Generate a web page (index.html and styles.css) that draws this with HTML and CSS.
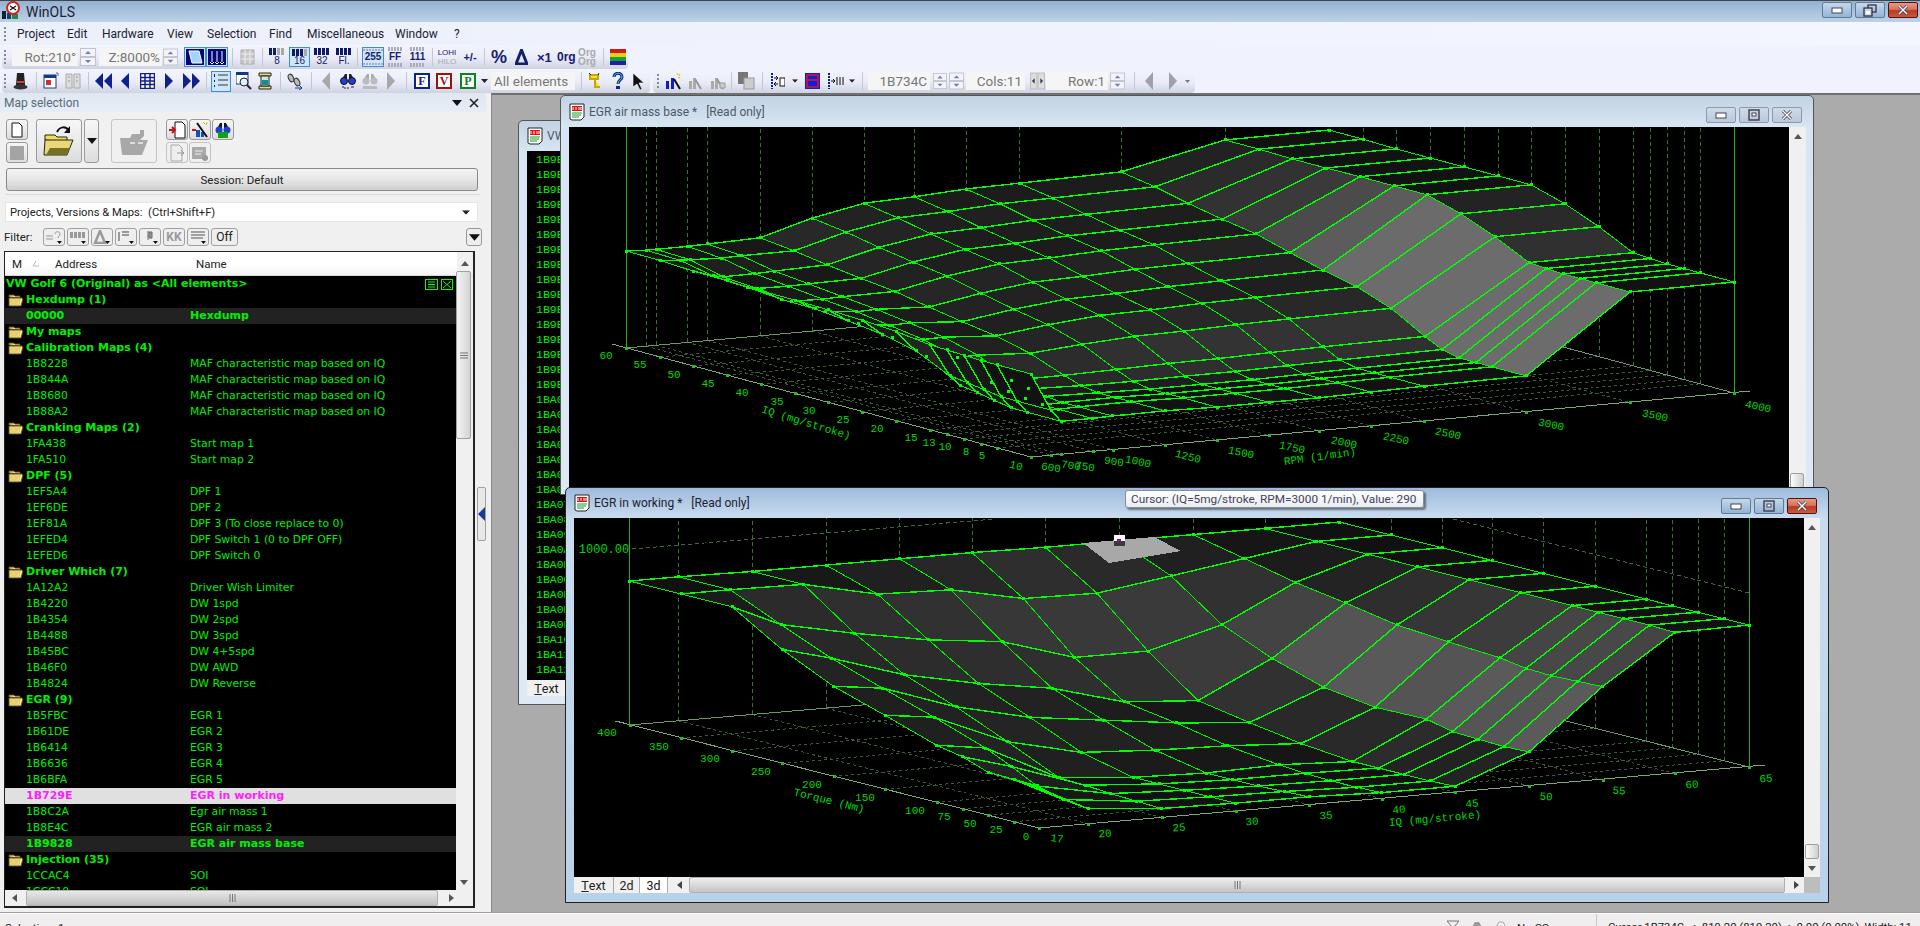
FILE: index.html
```html
<!DOCTYPE html>
<html lang="en">
<head>
<meta charset="utf-8">
<title>WinOLS</title>
<link rel="stylesheet" href="styles.css">
</head>
<body>
<svg class="defs" width="0" height="0" aria-hidden="true">
  <symbol id="folder" viewBox="0 0 16 14">
    <path d="M1 4V2h5l1 1h5v2z" fill="#f6e27a" stroke="#5a4a10"/>
    <path d="M1 5h13l1 1-2 7H1z" fill="#f4ecb0" stroke="#5a4a10"/>
    <path d="M2 7h11M2 9h10M2 11h10" stroke="#d8b830"/>
  </symbol>
  <symbol id="winicon" viewBox="0 0 16 18">
    <path d="M1 1h14v13l-3 3H3l-2-1z" fill="#fff" stroke="#222"/>
    <rect x="3" y="3" width="10" height="5" fill="#e01010"/>
    <path d="M4 4v3M7 4v3M10 4v3M12 4v3" stroke="#fff"/>
    <path d="M3 10h10M3 12h9M3 14h7" stroke="#10a030"/>
  </symbol>
  <symbol id="spin" viewBox="0 0 16 18">
    <rect x=".5" y=".5" width="15" height="8" fill="#f4f4f8" stroke="#c0c4d0"/>
    <rect x=".5" y="9.5" width="15" height="8" fill="#f4f4f8" stroke="#c0c4d0"/>
    <path d="M5 6l3-3 3 3zM5 12l3 3 3-3z" fill="#6c7cb8"/>
  </symbol>
  <symbol id="ddown" viewBox="0 0 7 4"><path d="M0 0h7L3.500 4z" fill="#222"/></symbol>
  <symbol id="capmin" viewBox="0 0 12 8"><rect x="1" y="2" width="10" height="5" fill="#fff" stroke="#445"/></symbol>
  <symbol id="capmax" viewBox="0 0 12 12"><rect x="1" y="1" width="10" height="10" fill="none" stroke="#445" stroke-width="1.500"/><rect x="4" y="4" width="4" height="3" fill="#fff" stroke="#445"/></symbol>
  <symbol id="capx" viewBox="0 0 12 10"><path d="M2 1l8 8M10 1L2 9" stroke="#445" stroke-width="3"/><path d="M2 1l8 8M10 1L2 9" stroke="#fff" stroke-width="1.400"/></symbol>
</svg>

<header class="titlebar">
  <svg class="appicon" width="18" height="19" viewBox="0 0 18 19"><rect x="0" y="10" width="4" height="8" fill="#123"/><rect x="5" y="12" width="4" height="6" fill="#146"/><rect x="10" y="13" width="6" height="5" fill="#284"/><circle cx="11" cy="7" r="6" fill="#fff" stroke="#d02020" stroke-width="2"/><path d="M8 5l6 4M14 5L8 9" stroke="#111" stroke-width="1.200"/></svg>
  <span class="apptitle">WinOLS</span>
  <div class="capgroup">
    <span class="cap capa"><svg width="12" height="8"><use href="#capmin"/></svg></span>
    <span class="cap capa"><svg width="14" height="13" viewBox="0 0 14 13"><rect x="5" y="1" width="8" height="7" fill="none" stroke="#334" stroke-width="1.300"/><rect x="1" y="4" width="8" height="8" fill="#c6d6e8" stroke="#334" stroke-width="1.300"/><rect x="3" y="7" width="4" height="3" fill="#fff"/></svg></span>
    <span class="cap capred"><svg width="12" height="10"><use href="#capx"/></svg></span>
  </div>
</header>

<nav class="menubar">
  <span class="grip"></span>
  <span class="mi m1w">Project</span><span class="mi m2w">Edit</span><span class="mi m3w">Hardware</span><span class="mi m4w">View</span><span class="mi m5w">Selection</span><span class="mi m6w">Find</span><span class="mi m7w">Miscellaneous</span><span class="mi m8w">Window</span><span class="mi">?</span>
</nav>

<div class="toolrow">
  <div class="tband band1">
    <span class="grip g2"></span>
    <span class="tbox m6 w66">Rot:210°</span>
    <svg class="m2" width="16" height="18"><use href="#spin"/></svg>
    <span class="tbox m3 w63">Z:8000%</span>
    <svg class="m1" width="15" height="18"><use href="#spin"/></svg>
    <span class="tact m6 w22"><svg width="18" height="16" viewBox="0 0 18 16"><rect width="18" height="16" fill="#05057a"/><path d="M3 2h10l3 12H6z" fill="#9fd4ff" stroke="#fff"/></svg></span>
    <span class="tact w22"><svg width="18" height="16" viewBox="0 0 18 16"><rect width="18" height="16" fill="#05057a"/><path d="M4 2v11M9 2v11M14 2v11M2 13l2 2 2-2M7 13l2 2 2-2M12 13l2 2 2-2" stroke="#fff" fill="none"/></svg></span>
    <span class="sep m4"></span>
    <svg class="m7" width="15" height="16" viewBox="0 0 15 16"><path d="M1 1h13v14H1z" fill="#c8c8c8" stroke="#aaa"/><path d="M1 5h13M1 10h13M5 1v14M10 1v14" stroke="#eee"/></svg>
    <span class="sep m7"></span>
    <span class="tico m6 w16"><svg width="16" height="7" viewBox="0 0 16 7"><path d="M0 0h3v7H0zM4 0h3v7H4z" fill="#111a66"/><path d="M8 0h3v7H8zM12 0h3v7h-3z" fill="#aaa"/></svg><b>8</b></span>
    <span class="tact m4 w21 stack"><svg width="16" height="7" viewBox="0 0 16 7"><path d="M0 0h3v7H0zM4 0h3v7H4zM8 0h3v7H8z" fill="#111a66"/><path d="M12 0h3v7h-3z" fill="#aaa"/></svg><b>16</b></span>
    <span class="tico m4 w16"><svg width="16" height="7" viewBox="0 0 16 7"><path d="M0 0h3v7H0zM4 0h3v7H4zM8 0h3v7H8zM12 0h3v7h-3z" fill="#111a66"/></svg><b>32</b></span>
    <span class="tico m6 w16"><svg width="16" height="7" viewBox="0 0 16 7"><path d="M0 0h3v7H0zM4 0h3v7H4zM8 0h3v7H8zM12 0h3v7h-3z" fill="#111a66"/></svg><b>Fl.</b></span>
    <span class="sep m5"></span>
    <span class="tact m4 w22 fmt"><i></i><b>255</b><i></i></span>
    <span class="tico fmt m4 w14"><i></i><b>FF</b><i></i></span>
    <span class="tico fmt m8 w15"><i></i><b>111</b><i></i></span>
    <span class="sep m7"></span>
    <span class="tico lohi m5 w18"><b>LOHI</b><i>HILO</i></span>
    <span class="tbig m6 w16 plus">+/-</span>
    <span class="sep m6"></span>
    <span class="tbig m6 w16 pct">%</span>
    <svg class="m8" width="13" height="16" viewBox="0 0 13 16"><path d="M6.500 1L12 15H1z" fill="none" stroke="#14206e" stroke-width="3"/></svg>
    <span class="tbig m9 w13 x1">×1</span>
    <span class="tbig m7 w16 org">0rg</span>
    <span class="tico fmt org2 m5 w18"><b>Org</b><b>Org</b></span>
    <span class="sep m7"></span>
    <svg class="m6" width="16" height="16" viewBox="0 0 16 16"><rect width="16" height="4" fill="#d01818"/><rect y="4" width="16" height="4" fill="#e8d010"/><rect y="8" width="16" height="4" fill="#18a030"/><rect y="12" width="16" height="4" fill="#1820b0"/></svg>
  </div>
</div>

<div class="toolrow">
  <div class="tband band2">
    <span class="grip g2"></span>
    <svg class="m7" width="15" height="18" viewBox="0 0 15 18"><path d="M4 1h7l1 12H3z" fill="#222"/><rect x="4" y="9" width="7" height="2" fill="#d04040"/><ellipse cx="7.500" cy="15" rx="7" ry="2.500" fill="#333"/></svg>
    <span class="sep m8"></span>
    <svg class="m6" width="16" height="18" viewBox="0 0 16 18"><rect x="1" y="3" width="12" height="13" fill="#fff" stroke="#123a80"/><rect x="1" y="3" width="12" height="3" fill="#123a80"/><rect x="3" y="8" width="5" height="5" fill="#d03030"/><path d="M13 1h2v3" stroke="#666" fill="none"/></svg>
    <svg class="m6" width="16" height="18" viewBox="0 0 16 18"><path d="M1 2h6v14H1zM9 2h6v14H9z" fill="#ddd" stroke="#aaa"/><path d="M3 5h2M11 5h2M3 9h2M11 9h2" stroke="#999"/></svg>
    <span class="sep m7"></span>
    <svg class="m6" width="17" height="18" viewBox="0 0 17 18"><path d="M8 1v16L0 9zM17 1v16L9 9z" fill="#10208c"/></svg>
    <svg class="m8" width="10" height="18" viewBox="0 0 10 18"><path d="M9 1v16L1 9z" fill="#10208c"/></svg>
    <svg class="m10" width="15" height="16" viewBox="0 0 15 16"><rect x=".5" y=".5" width="14" height="15" fill="#fff" stroke="#10208c" stroke-width="1.500"/><path d="M5 1v14M10 1v14M1 4.500h13M1 8h13M1 11.500h13" stroke="#10208c" stroke-width="1.500"/></svg>
    <svg class="m9" width="10" height="18" viewBox="0 0 10 18"><path d="M1 1v16l8-8z" fill="#10208c"/></svg>
    <svg class="m9" width="17" height="18" viewBox="0 0 17 18"><path d="M0 1v16l8-8zM9 1v16l8-8z" fill="#10208c"/></svg>
    <span class="sep m6"></span>
    <span class="tact m4 w20 tall"><svg width="14" height="16" viewBox="0 0 14 16"><path d="M0 1v3M0 7v2M0 12v2" stroke="#10208c" stroke-width="2"/><path d="M4 2h10M4 7h10M4 12h10" stroke="#333"/></svg></span>
    <svg class="m5" width="16" height="18" viewBox="0 0 16 18"><rect x="0" y="0" width="12" height="12" fill="#fff" stroke="#123a80"/><rect x="0" y="0" width="12" height="3" fill="#123a80"/><circle cx="8" cy="10" r="4" fill="#dfefff" stroke="#222"/><path d="M11 13l4 4" stroke="#222" stroke-width="2"/></svg>
    <svg class="m6" width="14" height="18" viewBox="0 0 14 18"><path d="M1 1h12v3H1zM1 14h12v3H1z" fill="#e8d878" stroke="#222"/><path d="M3 4h8v10H3z" fill="#cfe4e0" stroke="#222"/><rect x="4" y="8" width="6" height="5" fill="#109090"/></svg>
    <span class="sep m8"></span>
    <svg class="m5" width="18" height="18" viewBox="0 0 18 18"><ellipse cx="5" cy="6" rx="2.500" ry="4" transform="rotate(-25 5 6)" fill="#bbb" stroke="#333"/><ellipse cx="11" cy="10" rx="2.500" ry="4" transform="rotate(-25 11 10)" fill="#bbb" stroke="#333"/><path d="M9 16h7M13 13l3 3-3 2" stroke="#123a80" fill="none"/></svg>
    <span class="sep m7"></span>
    <svg class="m10" width="8" height="18" viewBox="0 0 8 18"><path d="M8 0v18L0 9z" fill="#a8a8a8"/></svg>
    <svg class="m10" width="16" height="18" viewBox="0 0 16 18"><path d="M2 7l3-5h2v5zM14 7l-3-5H9v5z" fill="#222"/><circle cx="4" cy="9" r="3.500" fill="#2040d0" stroke="#111"/><circle cx="12" cy="9" r="3.500" fill="#2040d0" stroke="#111"/><path d="M2 15h2M5 15v2M8 15v2M11 15h3" stroke="#222"/></svg>
    <svg class="m6" width="16" height="18" viewBox="0 0 16 18"><path d="M2 7l3-5h2v5zM14 7l-3-5H9v5z" fill="#aaa"/><circle cx="4" cy="9" r="3.500" fill="#bbb"/><circle cx="12" cy="9" r="3.500" fill="#bbb"/><rect x="1" y="14" width="14" height="3" fill="#bbb"/></svg>
    <svg class="m9" width="8" height="18" viewBox="0 0 8 18"><path d="M0 0v18l8-9z" fill="#a8a8a8"/></svg>
    <span class="sep m11"></span>
    <span class="lett m7 lf">F</span>
    <span class="lett m6 lv">V</span>
    <span class="lett m8 lp">P</span>
    <svg class="m5" width="7" height="4"><use href="#ddown"/></svg>
    <span class="tbox m3 w84 left">All elements</span>
    <span class="sep m6"></span>
    <svg class="m6" width="14" height="18" viewBox="0 0 14 18"><path d="M2 3h8v4H2zM7 7v8h5" stroke="#c8a800" stroke-width="2" fill="#f0e040"/><path d="M1 1l2 2M11 1l-1 2" stroke="#222"/></svg>
    <svg class="m10" width="12" height="18" viewBox="0 0 12 18"><path d="M2 5c0-5 8-5 8 0 0 3-4 3-4 7" fill="none" stroke="#10208c" stroke-width="3"/><path d="M2 5c0-5 8-5 8 0 0 3-4 3-4 7" fill="none" stroke="#4ad0e8"/><rect x="4" y="14" width="4" height="3" fill="#10208c"/></svg>
    <svg class="m8" width="13" height="18" viewBox="0 0 13 18"><path d="M1 1l11 10H7l3 6-2 1-3-6-4 3z" fill="#111" stroke="#fff" stroke-width=".6"/></svg>
  </div>
  <div class="tband band3">
    <span class="grip g4"></span>
    <svg class="m6" width="17" height="18" viewBox="0 0 17 18"><path d="M1 9h3v8H1zM6 6h3v11H6z" fill="#1020c0"/><path d="M9 7l6 10" stroke="#111" stroke-width="2"/><path d="M12 1l1 2M15 2l-1 2M15 6l-2-1" stroke="#d8b800"/></svg>
    <svg class="m6" width="14" height="18" viewBox="0 0 14 18"><path d="M1 9h3v8H1zM5 6h3v11H5z" fill="#aaa"/><path d="M7 7l6 10" stroke="#999" stroke-width="2"/></svg>
    <svg class="m8" width="16" height="18" viewBox="0 0 16 18"><path d="M1 9h3v8H1zM5 6h3v11H5z" fill="#aaa"/><path d="M7 7l6 10" stroke="#999" stroke-width="2"/><path d="M10 11h5v5h-5z" fill="#ccc" stroke="#999"/></svg>
    <span class="sep m5"></span>
    <svg class="m6" width="17" height="18" viewBox="0 0 17 18"><rect x="0" y="0" width="10" height="12" fill="#777"/><rect x="6" y="6" width="10" height="11" fill="#ccc" stroke="#999"/></svg>
    <span class="sep m7"></span>
    <svg class="m8" width="14" height="16" viewBox="0 0 14 16"><path d="M1 0v16" stroke="#10208c" stroke-width="2" stroke-dasharray="2 1"/><path d="M3 5h4M5 3l2 2-2 2M3 11h4M5 9l-2 2 2 2" stroke="#111" fill="none"/><rect x="9" y="5" width="5" height="8" fill="#fff" stroke="#111"/></svg>
    <svg class="m7" width="6" height="4" viewBox="0 0 7 4"><use href="#ddown"/></svg>
    <svg class="m7" width="15" height="16" viewBox="0 0 15 16"><rect width="15" height="16" fill="#0a20e0"/><rect x="2" y="2" width="11" height="12" fill="none" stroke="#f01010" stroke-width="1.500"/><path d="M2 7h11" stroke="#f01010" stroke-width="1.500"/></svg>
    <svg class="m8" width="16" height="16" viewBox="0 0 16 16"><path d="M1 0v16" stroke="#10208c" stroke-width="2" stroke-dasharray="2 1"/><path d="M3 8h4M5 6l2 2-2 2M9 4v8M12 4v8M15 4v8" stroke="#111" fill="none"/></svg>
    <svg class="m5" width="6" height="4" viewBox="0 0 7 4"><use href="#ddown"/></svg>
    <span class="sep m7"></span>
    <span class="tbox m5 w62 right13">1B734C</span>
    <svg class="m3" width="14" height="18"><use href="#spin"/></svg>
    <svg class="m2" width="15" height="18"><use href="#spin"/></svg>
    <span class="tbox m2 w59 right13">Cols:11</span>
    <svg class="m5" width="15" height="18" viewBox="0 0 16 18"><rect x=".5" y=".5" width="7" height="17" fill="#ddd" stroke="#bbb"/><rect x="8.500" y=".5" width="7" height="17" fill="#ddd" stroke="#bbb"/><path d="M5 6L2 9l3 3zM11 6l3 3-3 3z" fill="#345"/></svg>
    <span class="tbox m1 w62 right13">Row:1</span>
    <svg class="m2" width="15" height="18"><use href="#spin"/></svg>
    <span class="sep m9"></span>
    <svg class="m10" width="8" height="18" viewBox="0 0 8 18"><path d="M8 0v18L0 9z" fill="#a0a0a8"/></svg>
    <svg class="m16" width="8" height="18" viewBox="0 0 8 18"><path d="M0 0v18l8-9z" fill="#a0a0a8"/></svg>
    <svg class="m8" width="5" height="3" viewBox="0 0 7 4"><path d="M0 0h7L3.500 4z" fill="#778"/></svg>
  </div>
</div>

<main class="main">
  <aside class="panel">
    <div class="phead"><span>Map selection</span><svg width="10" height="6" viewBox="0 0 10 6"><path d="M0 0h10L5 6z" fill="#111"/></svg><svg width="10" height="10" viewBox="0 0 10 10"><path d="M1 1l8 8M9 1L1 9" stroke="#222" stroke-width="1.600"/></svg></div>

    <div class="bigtools">
      <div class="col2">
        <span class="bt s22"><svg width="12" height="16" viewBox="0 0 12 16"><path d="M1 1h7l3 3v11H1z" fill="#fff" stroke="#111"/></svg></span>
        <span class="bt s22"><i class="greysq"></i></span>
      </div>
      <span class="bt big m8"><svg width="32" height="34" viewBox="0 0 32 34"><path d="M2 16v-5h10l2 2h10v5z" fill="#f0e050" stroke="#222"/><path d="M2 16h28l-6 15H1z" fill="#e8d878" stroke="#222"/><path d="M7 24h20l-3 7H3z" fill="#777020"/><path d="M14 8c3-6 9-6 12-1" fill="none" stroke="#111" stroke-width="2"/><path d="M27 2v7h-6z" fill="#111"/></svg></span>
      <span class="bt dropbtn m2"><svg width="10" height="6" viewBox="0 0 10 6"><path d="M0 0h10L5 6z" fill="#111"/></svg></span>
      <span class="bt big dis m12"><svg width="32" height="34" viewBox="0 0 32 34"><path d="M2 14h10l2-4h8v-4h4v6l-4 4h8l-6 15H4z" fill="#a8a8a8"/><path d="M12 19h5M20 19h5" stroke="#ddd" stroke-width="2"/></svg></span>
      <div class="col3 m9">
        <span class="bt s22"><svg width="18" height="18" viewBox="0 0 18 18"><path d="M7 1h7l3 3v13H7z" fill="#fff" stroke="#111"/><path d="M1 9h5M4 6l3 3-3 3" stroke="#d01010" stroke-width="2" fill="none"/></svg></span>
        <span class="bt s22"><svg width="18" height="18" viewBox="0 0 18 18"><path d="M1 9h4" stroke="#d01010" stroke-width="2"/><path d="M5 16h4V9H5zM10 16h3v-5h-3z" fill="#1050c0"/><path d="M6 2l10 14" stroke="#111" stroke-width="2"/><path d="M12 1l2 2M16 1l-1 3" stroke="#d8b800"/></svg></span>
        <span class="bt s22"><svg width="18" height="18" viewBox="0 0 18 18"><path d="M3 8l3-6h2v6zM15 8l-3-6h-2v6z" fill="#111"/><circle cx="5" cy="9" r="3.500" fill="#2040d0"/><circle cx="13" cy="9" r="3.500" fill="#2040d0"/><rect x="4" y="11" width="10" height="6" fill="#10a020"/></svg></span>
        <span class="bt s22 dis"><svg width="18" height="18" viewBox="0 0 18 18"><path d="M3 1h8l3 3v13H3z" fill="#eee" stroke="#aaa"/><path d="M9 9h7M13 6l3 3-3 3" stroke="#999" fill="none"/></svg></span>
        <span class="bt s22 dis"><svg width="18" height="18" viewBox="0 0 18 18"><rect x="1" y="3" width="14" height="12" fill="#aaa"/><path d="M4 7h8M4 10h6" stroke="#eee"/><circle cx="14" cy="14" r="3" fill="#999"/></svg></span>
      </div>
    </div>

    <div class="session"><span>Session: Default</span></div>
    <div class="hr"></div>
    <div class="combo"><span>Projects, Versions &amp; Maps:  (Ctrl+Shift+F)</span><svg width="8" height="5" viewBox="0 0 7 4"><use href="#ddown"/></svg></div>
    <div class="filter">
      <span class="flabel">Filter:</span>
      <span class="fb"><svg width="18" height="14" viewBox="0 0 18 14"><path d="M1 6h7M1 9h7M10 4c0-3 5-3 5 0 0 2-2 2-2 4" fill="none" stroke="#999"/><path d="M12 11h5l-2.500 3z" fill="#111"/></svg></span>
      <span class="fb"><svg width="18" height="14" viewBox="0 0 18 14"><path d="M1 2h3v6H1zM5 2h3v6H5zM9 2h3v6H9zM13 2h3v6h-3z" fill="#999"/><path d="M12 11h5l-2.500 3z" fill="#111"/></svg></span>
      <span class="fb"><svg width="18" height="14" viewBox="0 0 18 14"><path d="M7 1L2 13h10z" fill="none" stroke="#999" stroke-width="2.500"/><path d="M12 11h5l-2.500 3z" fill="#111"/></svg></span>
      <span class="fb"><svg width="18" height="14" viewBox="0 0 18 14"><path d="M2 2v9M5 2h7M5 5h7" stroke="#999" stroke-width="2" fill="none"/><path d="M12 11h5l-2.500 3z" fill="#111"/></svg></span>
      <span class="fb"><svg width="18" height="14" viewBox="0 0 18 14"><path d="M7 1v9M8 2h3v6H8z" stroke="#666" fill="#999"/><path d="M12 11h5l-2.500 3z" fill="#111"/></svg></span>
      <span class="fb ftxt">KK</span>
      <span class="fb"><svg width="18" height="14" viewBox="0 0 18 14"><path d="M2 2h14M2 5h14M2 8h12" stroke="#888" stroke-width="1.500"/><path d="M12 11h5l-2.500 3z" fill="#111"/></svg></span>
      <span class="fb foff">Off</span>
      <span class="fdrop"><svg width="11" height="7" viewBox="0 0 10 6"><path d="M0 0h10L5 6z" fill="#111"/></svg></span>
    </div>

    <section class="list">
      <div class="lhead"><span class="hm">M</span><span class="hs"><svg width="8" height="7" viewBox="0 0 8 7"><path d="M4 1L1 6h6" fill="none" stroke="#bbb"/></svg></span><span class="ha">Address</span><span class="hn">Name</span><span class="hup"><svg width="8" height="5" viewBox="0 0 8 5"><path d="M0 5h8L4 0z" fill="#555"/></svg></span></div>
      <div class="lbody">
        <div class="rows">
          <div class="row bold top"><span>VW Golf 6 (Original) as &lt;All elements&gt;</span><svg class="topic" width="13" height="11" viewBox="0 0 13 11"><rect x=".5" y=".5" width="12" height="10" fill="none" stroke="#0f0"/><path d="M3 3h7M3 5.500h7M3 8h7" stroke="#0f0"/></svg><svg class="topic" width="12" height="11" viewBox="0 0 12 11"><rect x=".5" y=".5" width="11" height="10" fill="none" stroke="#0f0"/><path d="M2 2l8 7M10 2L2 9" stroke="#0f0"/></svg></div>
          <div class="row bold grp"><svg width="16" height="14"><use href="#folder"/></svg><span>Hexdump (1)</span></div>
          <div class="row bold dark"><span class="a">00000</span><span>Hexdump</span></div>
          <div class="row bold grp"><svg width="16" height="14"><use href="#folder"/></svg><span>My maps</span></div>
          <div class="row bold grp"><svg width="16" height="14"><use href="#folder"/></svg><span>Calibration Maps (4)</span></div>
          <div class="row"><span class="a">1B8228</span><span>MAF characteristic map based on IQ</span></div>
          <div class="row"><span class="a">1B844A</span><span>MAF characteristic map based on IQ</span></div>
          <div class="row"><span class="a">1B8680</span><span>MAF characteristic map based on IQ</span></div>
          <div class="row"><span class="a">1B88A2</span><span>MAF characteristic map based on IQ</span></div>
          <div class="row bold grp"><svg width="16" height="14"><use href="#folder"/></svg><span>Cranking Maps (2)</span></div>
          <div class="row"><span class="a">1FA438</span><span>Start map 1</span></div>
          <div class="row"><span class="a">1FA510</span><span>Start map 2</span></div>
          <div class="row bold grp"><svg width="16" height="14"><use href="#folder"/></svg><span>DPF (5)</span></div>
          <div class="row"><span class="a">1EF5A4</span><span>DPF 1</span></div>
          <div class="row"><span class="a">1EF6DE</span><span>DPF 2</span></div>
          <div class="row"><span class="a">1EF81A</span><span>DPF 3 (To close replace to 0)</span></div>
          <div class="row"><span class="a">1EFED4</span><span>DPF Switch 1 (0 to DPF OFF)</span></div>
          <div class="row"><span class="a">1EFED6</span><span>DPF Switch 0</span></div>
          <div class="row bold grp"><svg width="16" height="14"><use href="#folder"/></svg><span>Driver Which (7)</span></div>
          <div class="row"><span class="a">1A12A2</span><span>Driver Wish Limiter</span></div>
          <div class="row"><span class="a">1B4220</span><span>DW 1spd</span></div>
          <div class="row"><span class="a">1B4354</span><span>DW 2spd</span></div>
          <div class="row"><span class="a">1B4488</span><span>DW 3spd</span></div>
          <div class="row"><span class="a">1B45BC</span><span>DW 4+5spd</span></div>
          <div class="row"><span class="a">1B46F0</span><span>DW AWD</span></div>
          <div class="row"><span class="a">1B4824</span><span>DW Reverse</span></div>
          <div class="row bold grp"><svg width="16" height="14"><use href="#folder"/></svg><span>EGR (9)</span></div>
          <div class="row"><span class="a">1B5FBC</span><span>EGR 1</span></div>
          <div class="row"><span class="a">1B61DE</span><span>EGR 2</span></div>
          <div class="row"><span class="a">1B6414</span><span>EGR 3</span></div>
          <div class="row"><span class="a">1B6636</span><span>EGR 4</span></div>
          <div class="row"><span class="a">1B6BFA</span><span>EGR 5</span></div>
          <div class="row bold sel"><span class="a">1B729E</span><span>EGR in working</span></div>
          <div class="row"><span class="a">1B8C2A</span><span>Egr air mass 1</span></div>
          <div class="row"><span class="a">1B8E4C</span><span>EGR air mass 2</span></div>
          <div class="row bold dark"><span class="a">1B9828</span><span>EGR air mass base</span></div>
          <div class="row bold grp"><svg width="16" height="14"><use href="#folder"/></svg><span>Injection (35)</span></div>
          <div class="row"><span class="a">1CCAC4</span><span>SOI</span></div>
          <div class="row"><span class="a">1CCC10</span><span>SOI</span></div>
        </div>
        <div class="lvs"><span class="lthumb"><svg width="8" height="7" viewBox="0 0 8 7"><path d="M0 1h8M0 3.500h8M0 6h8" stroke="#777"/></svg></span><svg class="ldown" width="8" height="5" viewBox="0 0 8 5"><path d="M0 0h8L4 5z" fill="#555"/></svg></div>
      </div>
      <div class="lhs"><svg width="5" height="8" viewBox="0 0 5 8"><path d="M5 0v8L0 4z" fill="#555"/></svg><span class="hthumb"><svg width="7" height="8" viewBox="0 0 7 8"><path d="M1 0v8M3.500 0v8M6 0v8" stroke="#777"/></svg></span><svg width="5" height="8" viewBox="0 0 5 8"><path d="M0 0v8l5-4z" fill="#555"/></svg></div>
    </section>
    <span class="handle"><i></i></span>
  </aside>

  <div class="mdi">
    <article class="win w1">
      <div class="wtitle"><svg width="16" height="18"><use href="#winicon"/></svg><span>VW Golf 6 (Original)</span></div>
      <div class="hexbody">
        <div class="hex">1B9E00<br>1B9E10<br>1B9E20<br>1B9E30<br>1B9E40<br>1B9E50<br>1B9E60<br>1B9E70<br>1B9E80<br>1B9E90<br>1B9EA0<br>1B9EB0<br>1B9EC0<br>1B9ED0<br>1B9EE0<br>1B9EF0<br>1BA000<br>1BA010<br>1BA020<br>1BA030<br>1BA040<br>1BA050<br>1BA060<br>1BA070<br>1BA080<br>1BA090<br>1BA0A0<br>1BA0B0<br>1BA0C0<br>1BA0D0<br>1BA0E0<br>1BA0F0<br>1BA100<br>1BA110<br>1BA120</div>
        <div class="tabs"><span class="tab act1"><u>T</u>ext</span></div>
      </div>
    </article>

    <article class="win w2">
      <div class="wtitle"><svg width="16" height="18"><use href="#winicon"/></svg><span>EGR air mass base *   [Read only]</span>
        <div class="capgroup small"><span class="cap"><svg width="12" height="8"><use href="#capmin"/></svg></span><span class="cap"><svg width="12" height="12"><use href="#capmax"/></svg></span><span class="cap"><svg width="12" height="10"><use href="#capx"/></svg></span></div>
      </div>
      <div class="wbody b2">
        <svg class="plot" id="plot1" viewBox="569 127 1220 363"></svg>
        <div class="vs"><svg width="8" height="5" viewBox="0 0 8 5"><path d="M0 5h8L4 0z" fill="#555"/></svg><span class="vthumb t2"></span></div>
      </div>
    </article>

    <article class="win w3">
      <div class="wtitle"><svg width="16" height="18"><use href="#winicon"/></svg><span>EGR in working *   [Read only]</span>
        <div class="capgroup small"><span class="cap capa"><svg width="12" height="8"><use href="#capmin"/></svg></span><span class="cap capa"><svg width="12" height="12"><use href="#capmax"/></svg></span><span class="cap capred"><svg width="12" height="10"><use href="#capx"/></svg></span></div>
      </div>
      <div class="wbody b3">
        <svg class="plot" id="plot2" viewBox="574 518 1230 359"></svg>
        <div class="vs"><svg width="8" height="5" viewBox="0 0 8 5"><path d="M0 5h8L4 0z" fill="#555"/></svg><span class="vthumb t3"></span><svg width="8" height="5" viewBox="0 0 8 5"><path d="M0 0h8L4 5z" fill="#555"/></svg></div>
        <div class="tabs wide">
          <span class="tab act1"><u>T</u>ext</span><span class="tab t2d">2d</span><span class="tab t3d">3d</span>
          <svg class="tl" width="5" height="8" viewBox="0 0 5 8"><path d="M5 0v8L0 4z" fill="#444"/></svg>
          <span class="hbar"><svg width="7" height="8" viewBox="0 0 7 8"><path d="M1 0v8M3.500 0v8M6 0v8" stroke="#777"/></svg></span>
          <svg class="tr" width="5" height="8" viewBox="0 0 5 8"><path d="M0 0v8l5-4z" fill="#444"/></svg>
        </div>
        <div class="corner"></div>
      </div>
    </article>

    <div class="tooltip">Cursor: (IQ=5mg/stroke, RPM=3000 1/min), Value: 290</div>
  </div>
</main>

<footer class="status">
  <span class="st1">Selection: 1</span>
  <svg class="sti" width="14" height="14" viewBox="0 0 14 14"><path d="M1 1h12L8 7v6H6V7z" fill="none" stroke="#777"/></svg>
  <svg class="sti" width="14" height="14" viewBox="0 0 14 14"><path d="M2 7l3-5h2v5zM12 7L9 2H7v5z" fill="#999"/></svg>
  <svg class="sti" width="14" height="14" viewBox="0 0 14 14"><path d="M2 7l3-5h4l3 5z" fill="none" stroke="#aaa"/></svg>
  <span class="st2">No CS</span>
  <span class="st3">Cursor 1B734C =&gt; 819.20 (819.20) -&gt; 0.00 (0.00%), Width: 11</span>
</footer>
<script src="script.js"></script>
</body>
</html>
```

FILE: styles.css
```css
* { box-sizing: border-box; }
html, body { margin: 0; padding: 0; }
body {
  width: 1920px; height: 926px; overflow: hidden;
  display: flex; flex-direction: column;
  font: 11.500px Roboto, "Liberation Sans", sans-serif; color: #222;
  background: #f0f3fd;
}
.defs { position: absolute; }
svg { flex: none; display: block; }

.titlebar {
  height: 22px; display: flex; align-items: center;
  border-top: 1px solid #444;
  background: linear-gradient(#93b2d2, #bdd2e8);
  padding-left: 2px; position: relative;
}
.appicon { margin-top: -2px; }
.apptitle { margin-left: 6px; font-size: 14px; color: #223; }
.capgroup { margin-left: auto; display: flex; gap: 3px; margin-right: 2px; margin-top: -3px; }
.cap {
  width: 30px; height: 16px; display: flex; align-items: center; justify-content: center;
  border: 1px solid #8a9bb0; border-radius: 2px;
  background: linear-gradient(#d0dbe8, #bac8d8);
}
.capa { background: linear-gradient(#c6d8ea, #93b4d6); border-color: #607a98; }
.capred { background: linear-gradient(#e39a88 0%, #d8735a 45%, #b83c20 55%, #c85a40 100%); border-color: #5a1010; }
.capgroup.small { gap: 3px; margin-right: 3px; margin-top: 6px; }

.menubar {
  height: 23px; display: flex; align-items: center;
  background: linear-gradient(90deg, #ecf0fa, #f3f6fe);
  padding-left: 4px; font-size: 12px; color: #223;
}
.grip {
  width: 2px; height: 14px; flex: none;
  background: repeating-linear-gradient(#8a8a8a 0 2px, transparent 2px 4px);
}
.mi { flex: none; }
.menubar .grip { margin-right: 11px; }
.m1w { width: 50px; } .m2w { width: 35px; } .m3w { width: 65px; } .m4w { width: 40px; }
.m5w { width: 62px; } .m6w { width: 38px; } .m7w { width: 88px; } .m8w { width: 59px; }

.toolrow { height: 24px; display: flex; gap: 3px; padding-left: 2px; background: #f0f3fd; flex: none; }
.tband {
  display: flex; align-items: center; height: 24px;
  background: linear-gradient(#f3f5fd 0%, #e9ecf8 55%, #cfd2e0 100%);
  border-radius: 4px;
}
.band1 { width: 626px; }
.band2 { width: 648px; }
.band3 { width: 542px; }
.g2 { margin-left: 2px; } .g4 { margin-left: 4px; }
.m1 { margin-left: 1px; } .m2 { margin-left: 2px; } .m3 { margin-left: 3px; } .m4 { margin-left: 4px; }
.m5 { margin-left: 5px; } .m6 { margin-left: 6px; } .m7 { margin-left: 7px; } .m8 { margin-left: 8px; }
.m9 { margin-left: 9px; } .m10 { margin-left: 10px; } .m11 { margin-left: 11px; } .m12 { margin-left: 12px; } .m16 { margin-left: 16px; }
.w13 { width: 13px; } .w14 { width: 14px; } .w15 { width: 15px; } .w16 { width: 16px; } .w18 { width: 18px; }
.w20 { width: 20px; } .w21 { width: 21px; } .w22 { width: 22px; } .w59 { width: 59px; } .w62 { width: 62px; }
.w63 { width: 63px; } .w66 { width: 66px; } .w84 { width: 84px; }
.sep { width: 1px; height: 18px; background: #c4c6d2; flex: none; }
.tbox {
  height: 18px; background: #f5f5f5; color: #777; font-size: 13.500px; line-height: 18px;
  text-align: right; padding-right: 2px; flex: none; white-space: nowrap;
}
.tbox.left { text-align: left; padding-left: 3px; }
.tbox.right13 { font-size: 13.500px; padding-right: 3px; }
.tact {
  height: 20px; background: #cfe6fa; border: 1px solid #3c8ed8; display: flex; align-items: center; justify-content: center; flex: none;
}
.tact.stack, .tico { display: flex; flex-direction: column; align-items: center; flex: none; }
.tact.tall { height: 21px; }
.stack b, .tico b { font: 10px/10px "Liberation Sans", sans-serif; color: #14206e; display: block; }
.tico > svg { margin-bottom: 1px; }
.fmt { font-family: "Liberation Sans", sans-serif; flex-direction: column; line-height: 7px; }
.fmt i { display: block; width: 100%; height: 4px; margin: 1px 0; background: repeating-linear-gradient(90deg, #aab 0 2px, transparent 2px 3px); }
.fmt b { font: bold 10px/10px "Liberation Sans", sans-serif; color: #14206e; }
.org2 b { color: #aaa; font-size: 10px; line-height: 9px; }
.lohi b { font-size: 8px; line-height: 9px; color: #14206e; }
.lohi i { font: 8px/9px "Liberation Sans", sans-serif; color: #aaa; }
.tbig { font-family: "Liberation Sans", sans-serif; color: #14206e; font-weight: bold; flex: none; text-align: center; white-space: nowrap; }
.pct { font-size: 18px; }
.plus { font-size: 11px; }
.x1 { font-size: 13px; }
.org { font-size: 12px; }
.lett {
  width: 16px; height: 16px; flex: none; background: #fff; font: bold 12px/12px "Liberation Serif", serif; text-align: center;
  border: 2px solid;
}
.lf { color: #10208c; border-color: #10208c; }
.lv { color: #a01010; border-color: #a01010; }
.lp { color: #108020; border-color: #108020; }

.main { height: 819px; display: flex; flex: none; }
.panel { width: 491px; background: #f0f0f0; position: relative; display: flex; flex-direction: column; flex: none; }
.phead {
  height: 19px; flex: none; display: flex; align-items: center; padding-left: 4px;
  background: linear-gradient(#dfe7f1, #e6edf6); color: #5a6a78; font-size: 12px; width: 486px;
}
.phead span { flex: 1; }
.phead svg { margin-right: 7px; }
.bigtools { display: flex; height: 44px; margin: 7px 0 0 6px; flex: none; align-items: stretch; }
.col2 { display: flex; flex-direction: column; justify-content: space-between; }
.col3 { display: grid; grid-template-columns: repeat(3, 22px); grid-auto-rows: 21px; gap: 2px 1px; }
.bt {
  display: flex; align-items: center; justify-content: center;
  border: 1px solid #9a9a9a; border-radius: 3px;
  background: linear-gradient(#f6f6f6 0%, #e8e8e8 60%, #dcdcdc 100%);
}
.s22 { width: 22px; height: 21px; }
.big { width: 46px; height: 44px; }
.dropbtn { width: 15px; height: 44px; }
.dis { border-color: #c4c4c4; background: #f0f0f0; }
.greysq { width: 14px; height: 14px; background: #a4a4a4; display: block; }
.session {
  margin: 5px 0 0 6px; width: 472px; height: 23px; flex: none; display: flex; align-items: center; justify-content: center;
  border: 1px solid #8a8a8a; border-radius: 3px; background: linear-gradient(#f4f4f4 0%, #e6e6e6 50%, #cfcfcf 100%);
}
.hr { height: 1px; background: #dcdcdc; margin: 3px 4px 0 6px; width: 474px; flex: none; }
.combo {
  margin: 7px 0 0 5px; width: 473px; height: 20px; background: #fff; flex: none; display: flex; align-items: center; justify-content: space-between;
  padding: 0 7px 0 4px; border: 1px solid #e6e6e6; white-space: pre; font-size: 11.200px;
}
.filter { margin: 6px 0 0 4px; height: 18px; display: flex; align-items: center; flex: none; }
.flabel { width: 39px; }
.fb {
  width: 22px; height: 18px; margin-right: 2px; border: 1px solid #a0a0a0; border-radius: 3px;
  background: #eee; display: flex; align-items: center; justify-content: center; flex: none; font-size: 12px; color: #999;
}
.ftxt { font-weight: bold; }
.foff { width: 27px; color: #222; }
.fdrop { margin-left: 226px; width: 16px; height: 18px; border: 1px solid #999; border-radius: 3px; background: #eee; display: flex; align-items: center; justify-content: center; }

.list { margin: 5px 0 0 4px; width: 471px; height: 657px; border: 1px solid #222; border-right-width: 2px; border-bottom-width: 2px; background: #f0f0f0; display: flex; flex-direction: column; flex: none; }
.lhead { height: 24px; flex: none; display: flex; align-items: center; background: linear-gradient(#fff 50%, #f4f4f4); border-bottom: 1px solid #d8d8d8; position: relative; }
.hm { margin-left: 7px; width: 20px; }
.hs { width: 23px; }
.ha { width: 141px; }
.hn { flex: 1; }
.hup { width: 16px; background: #f0f0f0; height: 100%; display: flex; align-items: center; justify-content: center; flex: none; }
.lbody { display: flex; height: 614px; flex: none; }
.rows {
  width: 451px; background: #000; color: #00f000; overflow: hidden; flex: none;
  font: 10.800px/16px "DejaVu Sans", sans-serif;
}
.row { height: 16px; display: flex; align-items: center; padding-left: 21px; white-space: pre; }
.bold { font-weight: bold; font-size: 11px; }
.a { width: 164px; flex: none; }
.top { padding-left: 1px; }
.top span { flex: 1; }
.topic { margin-right: 3px; }
.grp { padding-left: 3px; }
.grp svg { margin-right: 2px; }
.dark { background: #222; }
.sel { background: #e0e0e0; color: #ff20ff; }
.lvs { width: 16px; flex: none; position: relative; background: #f0f0f0; }
.lthumb { display: flex; align-items: center; justify-content: center; width: 15px; height: 168px; margin-top: -5px; border: 1px solid #a0a0a0; border-radius: 2px; background: linear-gradient(90deg, #f4f4f4, #d4d4d4); }
.ldown { position: absolute; bottom: 5px; left: 4px; }
.lhs { height: 16px; flex: none; display: flex; align-items: center; background: #f0f0f0; padding: 0 0 0 7px; }
.hthumb { margin: 0 11px 0 9px; width: 412px; height: 16px; display: flex; align-items: center; justify-content: center; border: 1px solid #b0b0b0; border-radius: 2px; background: linear-gradient(#e8e8e8, #c0c0c0); }
.handle { position: absolute; left: 477px; top: 394px; width: 9px; height: 54px; background: #e8e8e8; border: 1px solid #a0a0a0; border-radius: 2px; display: flex; align-items: center; }
.handle i { display: block; border: 7px solid transparent; border-right-color: #1a3a9a; border-left: 0; }

.mdi { flex: 1; position: relative; background: #ababab; border-top: 2px solid #707070; border-left: 1px solid #888; overflow: hidden; }
.win {
  position: absolute; display: flex; flex-direction: column;
  border: 1px solid #555; border-radius: 5px 5px 0 0;
  background: linear-gradient(#c2d3e4, #d8e5f2 30px, #dde9f5);
}
.wtitle { height: 30px; display: flex; align-items: center; padding-left: 8px; flex: none; white-space: pre; font-size: 12px; color: #4c5868; }
.wtitle > svg { margin-right: 4px; }
.w1 { left: 26px; top: 25px; width: 700px; height: 585px; padding: 0 8px 8px; }
.w1 .wtitle { padding-left: 0; }
.hexbody { flex: 1; display: flex; flex-direction: column; background: #000; }
.hex { flex: 1; padding: 1px 0 0 9px; font: 11.500px/15px "Liberation Mono", monospace; color: #00f000; }
.tabs { height: 16px; background: #f0f0f0; display: flex; align-items: stretch; flex: none; font-size: 12.500px; }
.tab { padding: 0 4px; display: flex; align-items: center; justify-content: center; flex: none; }
.act1 { width: 40px; background: #f0f0f0; border-right: 1px solid #aaa; }
.t2d { width: 26px; border-right: 1px solid #aaa; }
.t3d { width: 28px; background: #fff; border-right: 1px solid #aaa; }
.w2 { left: 68px; top: 0; width: 1254px; height: 400px; padding: 0 8px 0; }
.w2 .wtitle { height: 31px; padding-left: 0; }
.wbody { display: grid; flex: none; }
.b2 { grid-template-columns: 1220px 17px; grid-template-rows: 363px; }
.plot { display: block; background: #000; }
#plot1 { width: 1220px; height: 363px; }
#plot2 { width: 1230px; height: 359px; }
.vs { background: #f0f0f0; display: flex; flex-direction: column; align-items: center; position: relative; padding-top: 7px; }
.vthumb { position: absolute; left: 1px; width: 14px; height: 15px; border: 1px solid #a0a0a0; border-radius: 2px; background: linear-gradient(90deg, #fbfbfb, #d0d0d0); }
.t2 { top: 346px; }
.t3 { top: 326px; }
.vs svg:last-child:not(:first-child) { position: absolute; bottom: 6px; left: 4px; }
.w3 { left: 73px; top: 392px; width: 1264px; height: 416px; padding: 0 8px 9px; background: linear-gradient(#9ebbdb, #c9dcef 30px, #b8d2ea); border-color: #222; }
.w3 .wtitle { padding-left: 0; color: #223; }
.b3 { grid-template-columns: 1230px 16px; grid-template-rows: 359px 16px; }
.wide { grid-column: 1; }
.tl { align-self: center; margin-left: 9px; }
.hbar { margin: 0 0 0 7px; width: 1096px; display: flex; align-items: center; justify-content: center; border: 1px solid #b0b0b0; border-radius: 2px; background: linear-gradient(#eee, #c4c4c4); }
.tr { align-self: center; margin-left: 9px; }
.corner { background: #bdbdbd; }
.tooltip {
  position: absolute; left: 633px; top: 395px; width: 299px; height: 18px; background: linear-gradient(#fff, #e8ecf4); border: 1px solid #8c8c8c; border-radius: 3px;
  box-shadow: 2px 2px 2px rgba(0,0,0,.45); padding-left: 5px; line-height: 16px; color: #445; font-size: 11.800px; white-space: nowrap;
}
.status { height: 14px; flex: none; background: #f0eeee; border-top: 1px solid #a0a0a0; display: flex; align-items: flex-start; padding: 7px 0 0 5px; overflow: hidden; position: relative; box-shadow: inset 0 1px 0 #fff; }
.st1 { width: 1441px; flex: none; margin-top: 1px; }
.sti { margin-right: 10px; }
.st2 { width: 81px; flex: none; margin-left: -1px; margin-top: 1px; }
.st3 { margin-left: 10px; white-space: nowrap; margin-top: 1px; font-size: 11.300px; }
.status::before { content: ""; position: absolute; left: 1596px; top: 1px; width: 1px; height: 14px; background: #c8c8c8; }
```

FILE: script.js
```js
(function () {
  function plot(c) {
    var n = c.di.length, m = c.dj.length, out = '';
    var sA = (c.R[1] - c.F[1]) / (c.R[0] - c.F[0]);
    var sB = (c.F[1] - c.L[1]) / (c.F[0] - c.L[0]);
    function bx(i, j) { return c.L[0] + c.di[i] + c.dj[j]; }
    function by(i, j) { return c.L[1] + c.di[i] * sA + c.dj[j] * sB; }
    function tx(i, j) { return bx(i, j).toFixed(1); }
    function ty(i, j) { return (by(i, j) - c.h(i, j)).toFixed(1); }
    function line(a, b, d, e, col, w, dash) {
      return '<line x1="' + a + '" y1="' + b + '" x2="' + d + '" y2="' + e + '" stroke="' + col + '" stroke-width="' + (w || 1) + '"' + (dash ? ' stroke-dasharray="' + dash + '"' : '') + '/>';
    }
    var i, j, top = c.top;
    // walls
    for (i = 1; i < n - 1; i++) out += line(bx(i, 0), by(i, 0), bx(i, 0), top, '#3a6e3a', 1, '4 3');
    for (j = 1; j < m - 1; j++) out += line(bx(n - 1, j), by(n - 1, j), bx(n - 1, j), top, '#3a6e3a', 1, '4 3');
    if (c.wall) out += c.wall.map(function (s) { return line(s[0], s[1], s[2], s[3], '#3f6a3f', 1, '4 3'); }).join('');
    // floor
    for (i = 1; i < n - 1; i++) out += line(bx(i, 0), by(i, 0), bx(i, m - 1), by(i, m - 1), '#3c5a3c', 1, '3 3');
    for (j = 1; j < m - 1; j++) out += line(bx(0, j), by(0, j), bx(n - 1, j), by(n - 1, j), '#3c5a3c', 1, '3 3');
    // frame
    out += line(bx(0, 0), by(0, 0), bx(n - 1, 0), by(n - 1, 0), '#6a9a6a');
    out += line(bx(n - 1, 0), by(n - 1, 0), bx(n - 1, m - 1), by(n - 1, m - 1), '#6a9a6a');
    out += line(bx(0, 0) - 14, by(0, 0) - 4, bx(0, m - 1), by(0, m - 1), '#7aa87a');
    out += line(bx(0, m - 1), by(0, m - 1), bx(n - 1, m - 1) + 16, by(n - 1, m - 1) - 2, '#7aa87a');
    out += line(bx(0, 0), by(0, 0), bx(0, 0), top, '#2aa82a');
    out += line(bx(n - 1, m - 1), by(n - 1, m - 1), bx(n - 1, m - 1), top, '#2aa82a');
    var t = '';
    for (j = 0; j < m; j++) t += '<rect x="' + (bx(0, j) - 1) + '" y="' + (by(0, j) - 1) + '" width="3" height="3" fill="#20c020"/>';
    for (i = 0; i < n; i++) t += '<rect x="' + (bx(i, m - 1) - 1) + '" y="' + (by(i, m - 1) - 1) + '" width="3" height="3" fill="#20c020"/>';
    out += t;
    // surface, back to front
    for (j = 0; j < m - 1; j++) {
      for (i = n - 2; i >= 0; i--) {
        var si = (c.h(i + 1, j) + c.h(i + 1, j + 1) - c.h(i, j) - c.h(i, j + 1)) / 2 / (c.di[i + 1] - c.di[i]);
        var sj = (c.h(i, j) + c.h(i + 1, j) - c.h(i, j + 1) - c.h(i + 1, j + 1)) / 2 / (c.dj[j + 1] - c.dj[j]);
        var g = Math.max(14, Math.min(108, Math.round(c.base + c.gain * si * si * (si > 0 ? 1 : 0) + c.gj * Math.abs(sj))));
        out += '<polygon points="' + tx(i, j) + ',' + ty(i, j) + ' ' + tx(i + 1, j) + ',' + ty(i + 1, j) + ' ' + tx(i + 1, j + 1) + ',' + ty(i + 1, j + 1) + ' ' + tx(i, j + 1) + ',' + ty(i, j + 1) + '" fill="rgb(' + g + ',' + g + ',' + g + ')"/>';
        out += line(tx(i, j), ty(i, j), tx(i + 1, j), ty(i + 1, j), '#00ff00', 1.4);
        out += line(tx(i, j), ty(i, j), tx(i, j + 1), ty(i, j + 1), '#00f000', 1);
        out += line(tx(i + 1, j), ty(i + 1, j), tx(i + 1, j + 1), ty(i + 1, j + 1), '#00f000', 1);
        out += line(tx(i, j + 1), ty(i, j + 1), tx(i + 1, j + 1), ty(i + 1, j + 1), '#00ff00', 1.4);
      }
    }
    for (j = 0; j < m; j++) for (i = 0; i < n; i++) {
      out += '<rect x="' + (bx(i, j) - 1.5) + '" y="' + (by(i, j) - c.h(i, j) - 1.5) + '" width="3" height="3" fill="#00ff00"/>';
    }
    if (c.extra) out += c.extra;
    // labels
    c.labels.forEach(function (l) {
      out += '<text class="axl" x="' + l[1] + '" y="' + l[2] + '" text-anchor="middle" dominant-baseline="central"' + (l[3] ? ' transform="rotate(' + l[3] + ' ' + l[1] + ' ' + l[2] + ')"' : '') + ' font-family="Liberation Mono, monospace" font-size="' + (l[4] || 11) + '" fill="#00d800">' + l[0] + '</text>';
    });
    var s = document.getElementById(c.id);
    s.setAttribute('shape-rendering', 'crispEdges');
    s.innerHTML = out;
  }

  // EGR air mass base
  var T = [97, 96, 96, 96, 96.6, 98, 113, 123, 125, 128, 129, 131, 153.5, 154];
  var B = [83, 45, 33, 33, 33.6, 34, 33, 33, 33, 34, 35, 36, 110.5, 111];
  var wG = [0, .06, .14, .21, .27, .37, .46, .54, .67, .87, .96, 1, 1, 1, 1];
  var wL = [0, .02, .15, .19, .25, .26, .32, .4, .55, .86, .9, .95, 1, 1, 1];
  var wH = [0, 0, .02, .02, .01, .01, .01, .24, .56, .95, .98, 1, 1, 1, 1];
  function h1(i, j) {
    var w = i >= 12 ? wH[j] : i <= 2 ? wL[j] : i <= 4 ? (wL[j] + wG[j]) / 2 : wG[j];
    return T[i] - (T[i] - B[i]) * w;
  }
  plot({
    id: 'plot1', L: [626, 348], F: [1031, 457], R: [1734, 393], top: 127,
    di: [0, 20, 30, 61.5, 81.5, 134, 186, 238, 288, 340, 393, 495, 599, 703],
    dj: [0, 34, 67, 101, 135, 169, 202, 236, 270, 304, 321, 338, 355, 371, 405],
    h: h1, base: 18, gain: 190, gj: 60,
    labels: [
      ['60', 606, 356], ['55', 640, 365], ['50', 674, 375], ['45', 708, 384], ['40', 742, 393], ['35', 777, 402], ['30', 809, 411], ['25', 843, 420], ['20', 877, 429], ['15', 911, 438], ['13', 929, 443], ['10', 945, 447], ['8', 966, 452], ['5', 982, 456],
      ['10', 1016, 466, 15], ['600', 1051, 468, 8], ['700', 1071, 466, 8], ['750', 1085, 467, 8], ['900', 1114, 462, 8], ['1000', 1138, 462, 12], ['1250', 1188, 457, 15],
      ['1500', 1241, 453, 12], ['1750', 1292, 448, 12], ['2000', 1344, 443, 12], ['2250', 1396, 439, 12], ['2500', 1448, 434, 12], ['3000', 1551, 425, 12], ['3500', 1655, 416, 12], ['4000', 1758, 407, 12],
      ['IQ (mg/stroke)', 806, 423, 17], ['RPM (1/min)', 1320, 457, -8]
    ]
  });

  // EGR in working
  var H = [
    [144, 144, 144, 114, 90, 74, 57, 52, 43, 42, 40],
    [144, 144, 122, 101, 84, 68, 50, 38, 25, 18, 15],
    [143, 143, 107, 78, 59, 37, 14, 13, 11, 10, 9],
    [143, 127, 94, 63, 42, 20, 8, 8, 8, 8, 8],
    [143, 125, 86, 52, 33, 16, 6, 6, 6, 7, 8],
    [143, 110, 64, 32, 24, 14, 8, 6, 5, 5, 6],
    [142, 109, 64, 27, 18, 10, 5, 5, 5, 5, 6],
    [142, 120, 84, 63, 47, 40, 41, 35, 34, 33, 34],
    [142, 131, 120, 112, 103, 99, 96, 92, 91, 92, 93],
    [142, 142, 142, 142, 142, 142, 142, 142, 142, 142, 141],
    [142, 142, 142, 142, 142, 142, 142, 142, 142, 142, 142]
  ];
  plot({
    id: 'plot2', L: [629.5, 725], F: [1039, 828], R: [1749, 767], top: 518,
    di: [0, 49, 122.5, 196.5, 270, 342.5, 416, 490, 563.5, 635.5, 710],
    dj: [0, 51.5, 102.5, 152.5, 204, 255.5, 307, 333, 358.5, 384.5, 409.5],
    h: function (i, j) { return H[i][j]; }, base: 17, gain: 110, gj: 45,
    wall: [[632, 549, 995, 519], [1453, 519, 1749, 593]],
    extra: '<polygon points="1083,543 1154,537 1181,551 1109,563" fill="#a8a8a8"/><rect x="1114" y="535" width="11" height="6" fill="#fff"/><rect x="1114" y="541" width="11" height="5" fill="#3a3a3a"/><rect x="1117" y="539" width="4" height="3" fill="#8a1090"/>',
    labels: [
      ['1000.00', 604, 550, 0, 12],
      ['400', 607, 733], ['350', 659, 747], ['300', 710, 759], ['250', 761, 772], ['200', 812, 785], ['150', 865, 798], ['100', 915, 811], ['75', 944, 817], ['50', 970, 824], ['25', 996, 830], ['0', 1026, 837],
      ['17', 1057, 839, 8], ['20', 1105, 834, -5], ['25', 1179, 828, -5], ['30', 1252, 822, -5], ['35', 1326, 816, -5], ['40', 1399, 810, -5], ['45', 1472, 804, -5], ['50', 1546, 797, 5], ['55', 1619, 791, 5], ['60', 1692, 785, -5], ['65', 1766, 779, -5],
      ['Torque (Nm)', 829, 801, 14], ['IQ (mg/stroke)', 1435, 819, -5]
    ]
  });
})();
```
